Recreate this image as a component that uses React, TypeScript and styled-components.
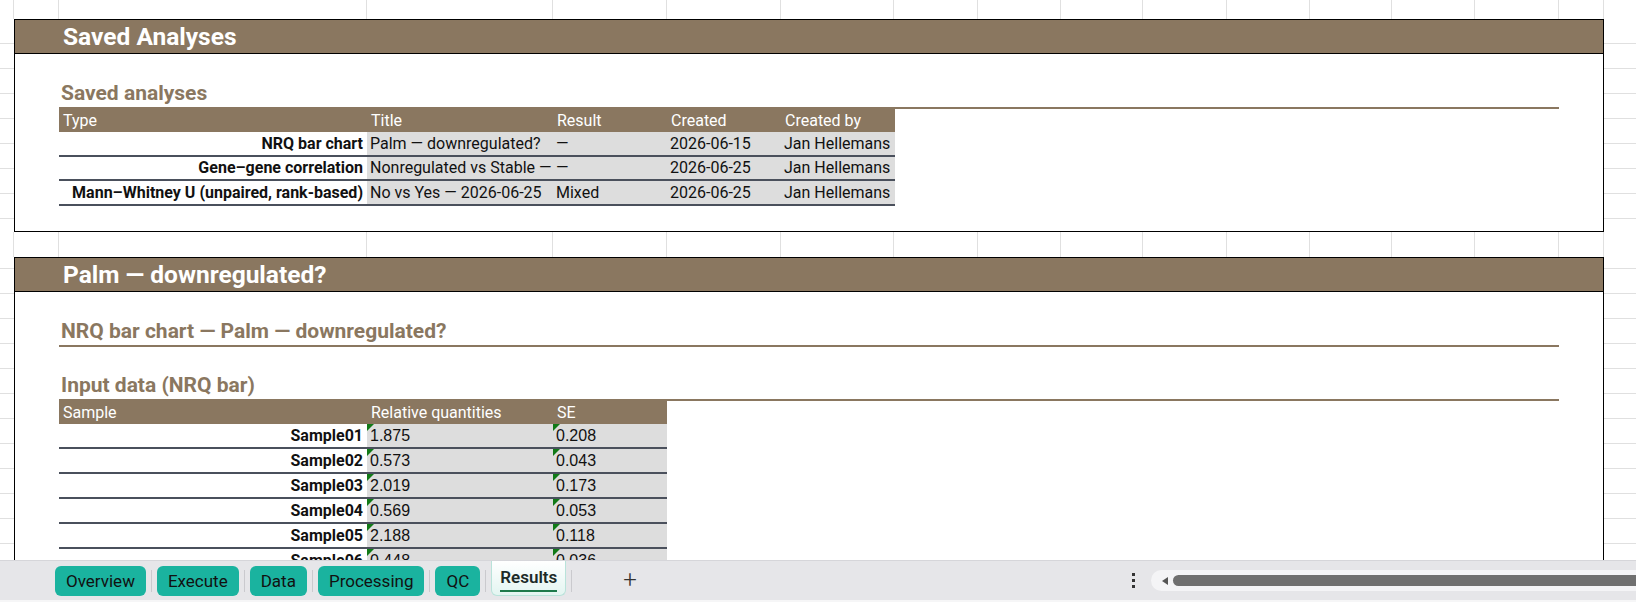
import React from 'react';
import styled, { createGlobalStyle } from 'styled-components';

const BROWN = '#8a7760';
const LINE = '#4a505c';
const GRID = '#e0e0e0';

const COLS = [14, 45, 308, 186, 114, 114, 113, 84, 83, 82, 84, 83, 82, 83, 84, 45];

const analyses = [
  { type: 'NRQ bar chart', title: 'Palm — downregulated?', result: '—', created: '2026-06-15', by: 'Jan Hellemans' },
  { type: 'Gene–gene correlation', title: 'Nonregulated vs Stable —', result: '—', created: '2026-06-25', by: 'Jan Hellemans' },
  { type: 'Mann–Whitney U (unpaired, rank-based)', title: 'No vs Yes — 2026-06-25', result: 'Mixed', created: '2026-06-25', by: 'Jan Hellemans' },
];

const samples = [
  ['Sample01', '1.875', '0.208'],
  ['Sample02', '0.573', '0.043'],
  ['Sample03', '2.019', '0.173'],
  ['Sample04', '0.569', '0.053'],
  ['Sample05', '2.188', '0.118'],
  ['Sample06', '0.448', '0.036'],
  ['Sample07', '1.204', '0.091'],
];

const tabs = ['Overview', 'Execute', 'Data', 'Processing', 'QC'];

const GridStrip = ({ height }: { height: number }) => (
  <GridRow $h={height}>
    {COLS.map((w, i) => (
      <GridCell key={i} $w={w} />
    ))}
    <GridFill />
  </GridRow>
);

export default () => (
  <>
    <GlobalStyle />
    <Sheet>
      <GridStrip height={19} />
      <Section>
        <SectionTitle>Saved Analyses</SectionTitle>
        <SectionBody $bottom={25}>
          <SubHeading>Saved analyses</SubHeading>
          <Table>
            <HeadRow $cols="308px 186px 114px 114px 114px">
              <HeadCell>Type</HeadCell>
              <HeadCell>Title</HeadCell>
              <HeadCell>Result</HeadCell>
              <HeadCell>Created</HeadCell>
              <HeadCell>Created by</HeadCell>
            </HeadRow>
            {analyses.map((a) => (
              <BodyRow key={a.type} $cols="308px 186px 114px 114px 114px" $h={24.5}>
                <KeyCell>{a.type}</KeyCell>
                <ValueCell>{a.title}</ValueCell>
                <ValueCell>{a.result}</ValueCell>
                <ValueCell>{a.created}</ValueCell>
                <ValueCell>{a.by}</ValueCell>
              </BodyRow>
            ))}
          </Table>
        </SectionBody>
      </Section>
      <GridStrip height={25} />
      <Section>
        <SectionTitle>Palm — downregulated?</SectionTitle>
        <SectionBody $bottom={0}>
          <SubHeading>NRQ bar chart — Palm — downregulated?</SubHeading>
          <SubHeading $top={25}>Input data (NRQ bar)</SubHeading>
          <Table>
            <HeadRow $cols="308px 186px 114px">
              <HeadCell>Sample</HeadCell>
              <HeadCell>Relative quantities</HeadCell>
              <HeadCell>SE</HeadCell>
            </HeadRow>
            {samples.map(([name, rq, se]) => (
              <BodyRow key={name} $cols="308px 186px 114px" $h={25}>
                <KeyCell>{name}</KeyCell>
                <ValueCell $num>
                  <TextFlag />
                  {rq}
                </ValueCell>
                <ValueCell $num>
                  <TextFlag />
                  {se}
                </ValueCell>
              </BodyRow>
            ))}
          </Table>
        </SectionBody>
      </Section>
    </Sheet>
    <TabBar>
      <Tabs>
        {tabs.map((t) => (
          <React.Fragment key={t}>
            <Tab>{t}</Tab>
            <TabSep />
          </React.Fragment>
        ))}
        <ActiveTab>
          <ActiveLabel>Results</ActiveLabel>
        </ActiveTab>
        <TabSep />
        <AddSheet>+</AddSheet>
      </Tabs>
      <ScrollArea>
        <Dots>
          <i />
          <i />
          <i />
        </Dots>
        <Track>
          <ScrollArrow />
          <Thumb />
        </Track>
      </ScrollArea>
    </TabBar>
  </>
);

const GlobalStyle = createGlobalStyle`
  html, body {
    margin: 0;
    padding: 0;
    background: #fff;
    overflow: hidden;
  }
  body {
    font-family: Roboto, "Liberation Sans", Arial, sans-serif;
    color: #111;
  }
`;

const Sheet = styled.div`
  height: 560px;
  overflow: hidden;
  background-color: #fff;
  background-image: repeating-linear-gradient(
    to bottom,
    transparent 0,
    transparent 24px,
    ${GRID} 24px,
    ${GRID} 25px
  );
  background-position: 0 -6px;
`;

const GridRow = styled.div<{ $h: number }>`
  display: flex;
  height: ${(p) => p.$h}px;
  background: #fff;
`;

const GridCell = styled.div<{ $w: number }>`
  flex: 0 0 ${(p) => p.$w}px;
  box-sizing: border-box;
  border-right: 1px solid ${GRID};
`;

const GridFill = styled.div`
  flex: 1;
`;

const Section = styled.section`
  margin-left: 14px;
  width: 1590px;
  box-sizing: border-box;
  border: 1px solid #000;
  background: #fff;
`;

const SectionTitle = styled.h1`
  margin: 0;
  height: 34px;
  box-sizing: border-box;
  border-bottom: 1px solid #000;
  background: ${BROWN};
  color: #fff;
  font-size: 24.5px;
  font-weight: 700;
  line-height: 33px;
  padding-left: 48px;
`;

const SectionBody = styled.div<{ $bottom: number }>`
  padding: 0 44px ${(p) => p.$bottom}px;
  display: flex;
  flex-direction: column;
`;

const SubHeading = styled.h2<{ $top?: number }>`
  margin: ${(p) => p.$top ?? 26}px 0 0;
  height: 29px;
  box-sizing: border-box;
  border-bottom: 2px solid ${BROWN};
  display: flex;
  align-items: flex-end;
  padding: 0 0 3px 2px;
  color: ${BROWN};
  font-size: 21px;
  font-weight: 700;
  line-height: 1;
`;

const Table = styled.div`
  display: flex;
  flex-direction: column;
  font-size: 16px;
`;

const HeadRow = styled.div<{ $cols: string }>`
  display: grid;
  grid-template-columns: ${(p) => p.$cols};
  height: 23px;
  background: ${BROWN};
  color: #fff;
  width: max-content;
`;

const HeadCell = styled.div`
  display: flex;
  align-items: center;
  padding: 0 4px;
  white-space: nowrap;
`;

const BodyRow = styled.div<{ $cols: string; $h: number }>`
  display: grid;
  grid-template-columns: ${(p) => p.$cols};
  height: ${(p) => p.$h}px;
  box-sizing: border-box;
  border-bottom: 2px solid ${LINE};
  width: max-content;
`;

const KeyCell = styled.div`
  display: flex;
  align-items: flex-end;
  justify-content: flex-end;
  padding: 0 4px 2px;
  font-weight: 700;
  background: #fff;
  white-space: nowrap;
  overflow: hidden;
`;

const ValueCell = styled.div<{ $num?: boolean }>`
  position: relative;
  display: flex;
  align-items: flex-end;
  padding: 0 3px 2px;
  background: #dddddd;
  white-space: nowrap;
  overflow: hidden;
  font-size: 16px;
  font-family: ${(p) => (p.$num ? '"Liberation Sans", Arial, sans-serif' : 'inherit')};
`;

const TextFlag = styled.span`
  position: absolute;
  top: 0;
  left: 0;
  width: 0;
  height: 0;
  border-top: 7px solid #117a17;
  border-right: 7px solid transparent;
`;

const TabBar = styled.div`
  height: 42px;
  box-sizing: border-box;
  border-top: 1px solid #d6d6da;
  border-bottom: 2px solid #f6f6f7;
  background: #e6e6e9;
  display: flex;
`;

const Tabs = styled.div`
  display: flex;
  align-items: flex-end;
  padding: 0 0 4px 55px;
  width: 1070px;
  box-sizing: border-box;
`;

const Tab = styled.div`
  height: 30px;
  box-sizing: border-box;
  padding: 0 11px;
  border-radius: 6px;
  background: #1ab39f;
  color: #111;
  font-size: 17px;
  display: flex;
  align-items: center;
`;

const TabSep = styled.div`
  width: 1px;
  height: 22px;
  margin: 0 5px 4px;
  background: #cacace;
`;

const ActiveTab = styled.div`
  height: 35px;
  box-sizing: border-box;
  padding: 0 8px;
  border: 1px solid #b9e3da;
  border-top: none;
  border-radius: 0 0 6px 6px;
  background: linear-gradient(#ffffff, #e3f5f1);
  display: flex;
  align-items: center;
`;

const ActiveLabel = styled.span`
  font-size: 17px;
  font-weight: 600;
  color: #1d2b28;
  padding-bottom: 3px;
  border-bottom: 2px solid #1e7a4c;
  margin-top: 2px;
`;

const AddSheet = styled.div`
  margin: 0 0 4px 46px;
  font-size: 24px;
  font-weight: 300;
  color: #333;
  line-height: 24px;
`;

const ScrollArea = styled.div`
  flex: 1;
  display: flex;
  align-items: center;
  padding-left: 62px;
`;

const Dots = styled.div`
  display: flex;
  flex-direction: column;
  gap: 3px;
  margin-right: 16px;

  i {
    display: block;
    width: 3px;
    height: 3px;
    background: #333;
  }
`;

const Track = styled.div`
  flex: 1;
  height: 21px;
  border-radius: 11px 0 0 11px;
  background: #f4f4f6;
  display: flex;
  align-items: center;
  padding-left: 11px;
`;

const ScrollArrow = styled.span`
  width: 0;
  height: 0;
  border-top: 4px solid transparent;
  border-bottom: 4px solid transparent;
  border-right: 6px solid #555;
  margin-right: 5px;
`;

const Thumb = styled.div`
  flex: 1;
  height: 11px;
  border-radius: 6px 0 0 6px;
  background: #6f6f6f;
`;
